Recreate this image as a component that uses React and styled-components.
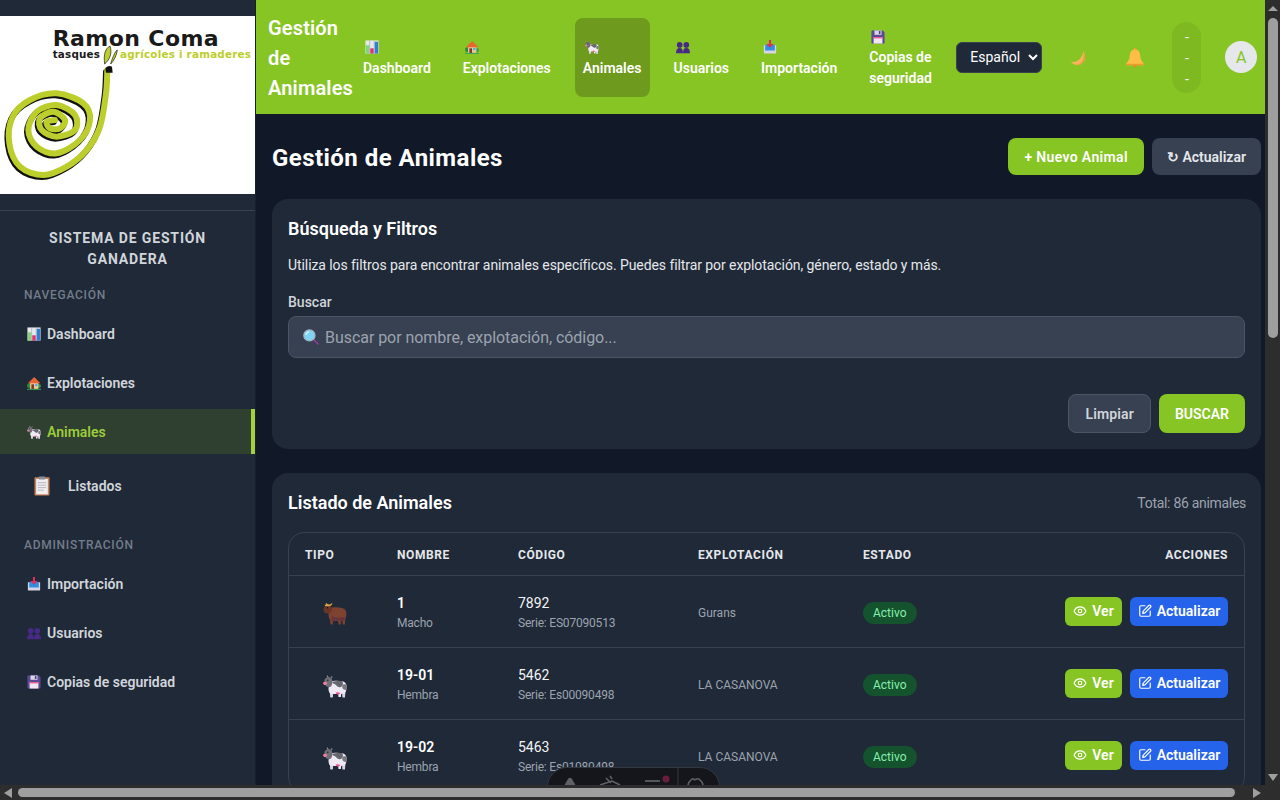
import React from 'react';
import styled, { createGlobalStyle } from 'styled-components';
import { Eye, SquarePen } from 'lucide-react';

const FONT = `Roboto, "Noto Sans", "Liberation Sans", sans-serif`;

const GlobalStyle = createGlobalStyle`
html {
  color-scheme: dark;
  background: #111827;
}
body {
  margin: 0;
  overflow: hidden;
  font-family: ${FONT};
  font-size: 14px;
  line-height: 21px;
  color: #fff;
}
* { box-sizing: border-box; }
`;

// smooth line through a list of points (catmull-rom), used for the logo spiral
const smooth = (pts) => {
  let d = `M${pts[0][0]} ${pts[0][1]}`;
  for (let i = 0; i < pts.length - 1; i++) {
    const p0 = pts[i - 1] || pts[i];
    const p1 = pts[i];
    const p2 = pts[i + 1];
    const p3 = pts[i + 2] || p2;
    d += ` C${p1[0] + (p2[0] - p0[0]) / 6} ${p1[1] + (p2[1] - p0[1]) / 6} ${p2[0] - (p3[0] - p1[0]) / 6} ${p2[1] - (p3[1] - p1[1]) / 6} ${p2[0]} ${p2[1]}`;
  }
  return d;
};

const SPIRAL = smooth([
  [322, 210], [318, 280], [300, 380], [260, 450], [200, 500], [130, 525], [60, 500], [28, 430], [38, 350],
  [90, 300], [170, 280], [250, 310], [270, 360], [240, 420], [170, 460], [110, 440], [85, 390], [110, 335],
  [170, 315], [225, 345], [225, 390], [170, 410], [125, 390], [120, 355], [160, 335], [195, 360], [180, 385],
  [150, 385], [140, 365], [165, 360],
]);

const Logo = () => (
  <LogoSvg viewBox="0 48 765 534">
    <rect x="0" y="48" width="765" height="534" fill="#fff" />
    <path d={SPIRAL} fill="none" stroke="#111" strokeWidth="18" strokeLinecap="round" transform="translate(-4 6)" />
    <path d={SPIRAL} fill="none" stroke="#bcce2b" strokeWidth="18" strokeLinecap="round" />
    <path d="M336 200c-8-4-16-2-20 6l2 12h20z" fill="#111" />
    <path d="M330 138c-14 8-20 24-16 54 14-12 24-32 16-54z" fill="#bcce2b" stroke="#111" strokeWidth="2" />
    <path d="M352 150c-6 2-16 26-20 42 10-10 18-26 20-42z" fill="#bcce2b" stroke="#111" strokeWidth="2" />
    <LogoText x="158" y="139" fontSize="66" textLength="498" fill="#1a1a1a">Ramon Coma</LogoText>
    <LogoText x="158" y="174" fontSize="31" textLength="142" fill="#1a1a1a">tasques</LogoText>
    <LogoText x="360" y="174" fontSize="31" textLength="393" fill="#bcce2b">agrícoles i ramaderes</LogoText>
  </LogoSvg>
);

// the page shows windows colour emoji, which are not installed here, so they are drawn
const ChartEmoji = ({ size = 14 }) => (
  <Glyph $size={size} viewBox="0 0 16 16">
    <rect x="0.5" y="0.5" width="15" height="15" fill="#e6e8ec" />
    <rect x="1" y="6" width="4" height="9.5" fill="#7fd67a" />
    <rect x="6" y="9.5" width="4" height="6" fill="#e8306f" />
    <rect x="11" y="2" width="4" height="13.5" fill="#2f7fd6" />
    <path d="M5.3 0.5v15M10.5 0.5v15" stroke="#9aa0aa" strokeWidth="0.6" />
  </Glyph>
);

const HouseEmoji = ({ size = 14 }) => (
  <Glyph $size={size} viewBox="0 0 16 16">
    <circle cx="2.6" cy="11" r="2.6" fill="#2e8b3e" />
    <circle cx="13.6" cy="11.5" r="2.3" fill="#3a9b4a" />
    <rect x="3.5" y="7" width="9.5" height="8" fill="#f0c59a" />
    <path d="M8.2 1.2 15.4 8.2H1z" fill="#e8662f" />
    <rect x="5" y="9.5" width="3" height="5.5" fill="#7a3c20" />
    <rect x="9.3" y="9" width="2.6" height="2.6" fill="#49b3e8" />
    <rect x="0" y="14.6" width="16" height="1.2" fill="#33a455" />
  </Glyph>
);

const CowEmoji = ({ size = 14 }) => (
  <Glyph $size={size} viewBox="0 0 24 24">
    <path d="M7 7.5c3-1 9-1 12.5-.3 2.6.6 4 2.2 4 5.2 0 3-.4 5-1.2 6.4l-.3 4.2h-2.4l-.3-3.4-1.2.6-.2 2.8h-2.4l-.3-3.1H10l-.3 3.1H7.4l-.4-3.4c-1-1-1.5-3-1.5-5.3z" fill="#efe9f4" />
    <path d="M9 8c3-1 7.5-1.2 10.4-.8 1.2 2.4.4 5.6-2.6 6-2.4.3-3.2-1.6-4.4-2.6-1-.9-2.6-.6-3.4-2.6z" fill="#66666e" />
    <path d="M20 10.5c1.4-.4 2.8-.4 3.5.2.2 1.8 0 3.6-.6 5.2-1.4.2-3.2-.6-3.6-2.4-.2-1.2 0-2.4.7-3z" fill="#77777e" />
    <path d="M1.6 5.4c.8-1.4 2.2-2.4 3.8-2.4 1.8 0 3.6 1 3.8 3 .3 2.2.2 4.6-1 6.2-1.2 1.2-3.2 1.2-4.6.4-1.4-1-2.6-5.4-2-7.2z" fill="#6f6f77" />
    <path d="M4.4 3.2 3.6 1.2l2 1zM8 3.6l1-2 .4 2.4z" fill="#a8a8a8" />
    <path d="M.2 8.7c.7-1.2 3-1.4 3.6-.2.5 1-.2 2.6-1.6 2.6S-.3 9.8.2 8.7z" fill="#ef7f9a" />
    <circle cx="4.8" cy="6.2" r="0.7" fill="#1e1e22" />
    <path d="M12.6 18.8c1.4-.7 3.4-.6 4.6.1-.4 1.2-1.2 1.7-2.2 1.7s-2-.6-2.4-1.8z" fill="#e9558f" />
    <path d="M7.4 19.8h2.3v3.6H7.4zM19.6 19.8H22v3.6h-2.4z" fill="#d9d0ea" />
  </Glyph>
);

const OxEmoji = ({ size = 24 }) => (
  <Glyph $size={size} viewBox="0 0 24 24">
    <path d="M6 6.5c3-1.6 9-1.6 13-.6 2.8.7 4.4 2.4 4.4 5.4 0 2.8-.4 4.6-1.2 6l-.3 5.2h-2.2l-.4-3.9-1.4.6-.2 3.3h-2.2l-.3-3.6H10l-.3 3.6H7.5l-.4-4.6C6 16.6 5.5 14.6 5.5 12z" fill="#7d4230" />
    <path d="M.6 6.6c.6-2 2.4-3.4 4.4-3.4 2 0 3.6 1.2 3.8 3.2.2 2.2-.6 3.8-2.2 4.6-1.4.6-3.2.6-4.4 0C.8 10.2.2 8.4.6 6.6z" fill="#6a3526" />
    <path d="M1.4 3.8C2.4 3.4 3 2.4 3 .8c1 1 2.4 1.8 3.6 1.6 1.2-.2 2-.8 2.6-1.8.2 1.6-.6 3-2 3.4-2 .6-4 .4-5.8-.2z" fill="#d9a441" />
    <circle cx="4.4" cy="5.8" r="0.7" fill="#1c1210" />
    <path d="M9 14.5c4 1.6 8 1.6 12.6.2l-.4 3.8H8z" fill="#57294a" opacity="0.6" />
  </Glyph>
);

const UsersEmoji = ({ size = 14 }) => (
  <Glyph $size={size} viewBox="0 0 16 16">
    <g fill="#472a86">
      <circle cx="4.2" cy="5.6" r="3.2" />
      <circle cx="11.8" cy="5.6" r="3.2" />
      <path d="M0 15c0-4 1.6-6 4.2-6S8 11 8 15zM8 15c0-4 1.2-6 3.8-6s4.2 2 4.2 6z" />
    </g>
  </Glyph>
);

const InboxEmoji = ({ size = 14 }) => (
  <Glyph $size={size} viewBox="0 0 16 16">
    <path d="M1 6h14v8.5a1 1 0 0 1-1 1H2a1 1 0 0 1-1-1z" fill="#d8d3e6" />
    <rect x="2.5" y="5.5" width="11" height="6.5" fill="#2f8fe0" />
    <path d="M6.8 0h2.4v4.6H12L8 8.8 4 4.6h2.8z" fill="#e22c5c" />
  </Glyph>
);

const FloppyEmoji = ({ size = 14 }) => (
  <Glyph $size={size} viewBox="0 0 16 16">
    <path d="M1 .5h12.5L15.5 2.5v12a1 1 0 0 1-1 1h-13a1 1 0 0 1-1-1v-13A1 1 0 0 1 1 .5z" fill="#5b4a96" />
    <rect x="4" y="0.5" width="8" height="5" fill="#d9d6e4" />
    <rect x="9" y="1.2" width="1.8" height="3.4" fill="#4a3c80" />
    <rect x="3" y="8" width="10" height="7.5" fill="#f1e7f2" />
    <rect x="3" y="8" width="10" height="1.6" fill="#ee5a8c" />
  </Glyph>
);

const ClipboardEmoji = ({ size = 20 }) => (
  <Glyph $size={size} viewBox="0 0 20 24">
    <rect x="1" y="1.5" width="18" height="22" rx="1.2" fill="#c8835a" />
    <rect x="3" y="3.5" width="14" height="18.5" fill="#f0eff2" />
    <rect x="6" y="0.5" width="8" height="3.6" rx="0.8" fill="#8a8f98" />
    <path d="M5 8h10M5 11h10M5 14h10M5 17h7" stroke="#a7a9b3" strokeWidth="1" />
  </Glyph>
);

const MoonEmoji = () => (
  <Glyph $size={16} viewBox="0 0 16 16">
    <path d="M13.5 1C16 6 15.5 11 12 13.5 9 15.8 4 15.5.7 11.7 4 12.4 7.5 11.5 9.8 9 11.8 6.8 13 4 13.5 1z" fill="#f8b65c" />
    <path d="M13.5 1C16 6 15.5 11 12 13.5c-1.6 1.2-3.6 1.7-5.6 1.5 2.4-.6 4.6-2 5.8-4.2 1.3-2.6 1.6-6.4 1.3-9.8z" fill="#ee9f42" />
  </Glyph>
);

const BellEmoji = () => (
  <Glyph $size={20} viewBox="0 0 20 20">
    <circle cx="10" cy="1.4" r="1.4" fill="#f5a623" />
    <path d="M10 1.6c3.6 0 5 2.8 5.2 6 .2 3.4 1.2 5.6 3.6 7.8v1.8H1.2v-1.8C3.6 13.2 4.6 11 4.8 7.6 5 4.4 6.4 1.6 10 1.6z" fill="#fdbd47" />
    <path d="M1.2 15.8h17.6v1.4H1.2z" fill="#f0982a" />
    <path d="M7.8 17.4h4.4c-.4 1.2-1.2 2.2-2.2 2.2s-1.8-1-2.2-2.2z" fill="#e8862a" />
  </Glyph>
);

const SearchEmoji = () => (
  <Glyph $size={16} viewBox="0 0 16 16">
    <path d="M9.6 10.4l1-1 5 5c.4.4.4 1 0 1.2-.3.3-.8.3-1.1 0z" fill="#8d3f9a" />
    <circle cx="6.4" cy="6.4" r="5.6" fill="#7fd4f5" stroke="#a7b2c4" strokeWidth="1.2" />
    <path d="M3 6c.2-1.8 1.4-3 3-3.2" stroke="#e5f7fd" strokeWidth="1.2" fill="none" />
  </Glyph>
);

// what shows of the dev toolbar above the scrollbar
const DevIcons = () => (
  <DevSvg viewBox="0 0 173 18">
    <path d="M16 18l4-7c1-1.6 3-1.6 4 0l4 7z" fill="#5f6169" />
    <path d="M52 17l12-4 8 4M58 10l5 5M62 8l2 3" stroke="#5f6169" strokeWidth="1.6" fill="none" />
    <path d="M97 13h15" stroke="#6a6c74" strokeWidth="1.6" />
    <circle cx="118" cy="11" r="3.5" fill="#6b1d3c" />
    <path d="M130 0v18" stroke="#343841" strokeWidth="1" />
    <path d="M140 17c1-5 3-4 4-6 1-.8 2 .6 3 .6s3-1.4 4-.6c1 2 3 1 4 6" stroke="#5f6169" strokeWidth="1.6" fill="none" />
  </DevSvg>
);

const ANIMALS = [
  { name: '1', sex: 'Macho', code: '7892', serie: 'ES07090513', farm: 'Gurans' },
  { name: '19-01', sex: 'Hembra', code: '5462', serie: 'Es00090498', farm: 'LA CASANOVA' },
  { name: '19-02', sex: 'Hembra', code: '5463', serie: 'Es01080498', farm: 'LA CASANOVA' },
];

const TOP_NAV = [
  { label: 'Dashboard', icon: <ChartEmoji /> },
  { label: 'Explotaciones', icon: <HouseEmoji /> },
  { label: 'Animales', icon: <CowEmoji />, active: true },
  { label: 'Usuarios', icon: <UsersEmoji /> },
  { label: 'Importación', icon: <InboxEmoji /> },
  { label: 'Copias de seguridad', icon: <FloppyEmoji />, narrow: true },
];

const App = () => {
  return (
    <Page>
      <GlobalStyle />
      <Sidebar>
        <LogoBox>
          <Logo />
        </LogoBox>
        <SideTitle>Sistema de Gestión Ganadera</SideTitle>
        <SideHeading>Navegación</SideHeading>
        <SideList>
          <SideItem><ChartEmoji />Dashboard</SideItem>
          <SideItem><HouseEmoji />Explotaciones</SideItem>
          <SideItem $active><CowEmoji />Animales</SideItem>
          <SideItemLarge><ClipboardEmoji />Listados</SideItemLarge>
        </SideList>
        <SideHeading $gap>Administración</SideHeading>
        <SideList>
          <SideItem><InboxEmoji />Importación</SideItem>
          <SideItem><UsersEmoji />Usuarios</SideItem>
          <SideItem><FloppyEmoji />Copias de seguridad</SideItem>
        </SideList>
      </Sidebar>

      <Content>
        <Header>
          <HeaderTitle>Gestión de Animales</HeaderTitle>
          <TopNav>
            {TOP_NAV.map((item) => (
              <TopItem key={item.label} $active={item.active} $narrow={item.narrow}>
                <TopIcon>{item.icon}</TopIcon>
                <span>{item.label}</span>
              </TopItem>
            ))}
          </TopNav>
          <LangSelect defaultValue="es">
            <option value="es">Español</option>
            <option value="ca">Català</option>
          </LangSelect>
          <IconSlot $width={16} $left={28}><MoonEmoji /></IconSlot>
          <IconSlot $width={20} $left={39}><BellEmoji /></IconSlot>
          <Dashes>
            <span>-</span>
            <span>-</span>
            <span>-</span>
          </Dashes>
          <Avatar>A</Avatar>
        </Header>

        <Main>
          <PageHead>
            <PageTitle>Gestión de Animales</PageTitle>
            <HeadActions>
              <HeadButton $primary>+ Nuevo Animal</HeadButton>
              <HeadButton>↻ Actualizar</HeadButton>
            </HeadActions>
          </PageHead>

          <Card>
            <CardTitle>Búsqueda y Filtros</CardTitle>
            <CardText>Utiliza los filtros para encontrar animales específicos. Puedes filtrar por explotación, género, estado y más.</CardText>
            <FieldLabel htmlFor="buscar">Buscar</FieldLabel>
            <SearchWrap>
              <SearchIcon><SearchEmoji /></SearchIcon>
              <SearchInput id="buscar" placeholder="Buscar por nombre, explotación, código..." />
            </SearchWrap>
            <FormActions>
              <FormButton>Limpiar</FormButton>
              <FormButton $primary>BUSCAR</FormButton>
            </FormActions>
          </Card>

          <Card>
            <ListHead>
              <CardTitle>Listado de Animales</CardTitle>
              <Total>Total: 86 animales</Total>
            </ListHead>
            <TableWrap>
              <Table>
                <colgroup>
                  <col width="92" />
                  <col width="121" />
                  <col width="180" />
                  <col width="165" />
                  <col />
                </colgroup>
                <thead>
                  <tr>
                    <Th>Tipo</Th>
                    <Th>Nombre</Th>
                    <Th>Código</Th>
                    <Th>Explotación</Th>
                    <Th>Estado</Th>
                    <Th $right>Acciones</Th>
                  </tr>
                </thead>
                <tbody>
                  {ANIMALS.map((a) => (
                    <tr key={a.name}>
                      <Td>
                        <AnimalIcon>{a.sex === 'Macho' ? <OxEmoji /> : <CowEmoji size={24} />}</AnimalIcon>
                      </Td>
                      <Td>
                        <Strong>{a.name}</Strong>
                        <Sub>{a.sex}</Sub>
                      </Td>
                      <Td>
                        <Code>{a.code}</Code>
                        <Sub>Serie: {a.serie}</Sub>
                      </Td>
                      <Td><Farm>{a.farm}</Farm></Td>
                      <Td><Status>Activo</Status></Td>
                      <Td>
                        <RowActions>
                          <RowButton $kind="view"><Eye size={14} />Ver</RowButton>
                          <RowButton $kind="edit"><SquarePen size={14} />Actualizar</RowButton>
                        </RowActions>
                      </Td>
                    </tr>
                  ))}
                </tbody>
              </Table>
            </TableWrap>
          </Card>
        </Main>
      </Content>

      <DevToolbar>
        <DevIcons />
      </DevToolbar>

      <VerticalBar>
        <ArrowUp />
        <VerticalThumb />
        <ArrowDown />
      </VerticalBar>
      <HorizontalBar>
        <ArrowLeft />
        <HorizontalThumb />
        <ArrowRight />
      </HorizontalBar>
    </Page>
  );
};

export default App;

const Page = styled.div`
display: flex;
width: 1280px;
height: 800px;
overflow: hidden;
background: #111827;
`;

const Sidebar = styled.aside`
flex: 0 0 256px;
height: 800px;
padding-top: 16px;
background: #1f2937;
border-right: 1px solid #182130;
`;

const LogoBox = styled.div`
height: 195px;
padding-bottom: 16px;
border-bottom: 1px solid #374151;
`;

const LogoSvg = styled.svg`
display: block;
width: 255px;
height: 178px;
`;

const LogoText = styled.text`
font-family: "DejaVu Sans", sans-serif;
font-weight: 700;
`;

const SideTitle = styled.h2`
margin: 0;
padding: 17px 24px 0;
font-size: 14px;
line-height: 21px;
font-weight: 700;
text-align: center;
text-transform: uppercase;
letter-spacing: 0.06em;
color: #d1d5db;
`;

const SideHeading = styled.h3`
margin: ${(p) => (p.$gap ? '23px' : '16px')} 0 7px;
padding-left: 24px;
font-size: 12px;
line-height: 18px;
font-weight: 500;
text-transform: uppercase;
letter-spacing: 0.06em;
color: #737c8a;
`;

const SideList = styled.nav`
display: flex;
flex-direction: column;
gap: 4px;
`;

const SideItem = styled.a`
display: flex;
align-items: center;
gap: 6px;
height: 45px;
padding: 1px 0 0 27px;
font-weight: 600;
color: ${(p) => (p.$active ? '#9ccc3c' : '#d1d5db')};
background: ${(p) => (p.$active ? '#2f3f30' : 'transparent')};
border-right: ${(p) => (p.$active ? '4px solid #a3d13a' : '0')};
`;

const SideItemLarge = styled(SideItem)`
height: 55px;
padding-left: 32px;
gap: 16px;
`;

const Content = styled.div`
flex: 1;
min-width: 0;
`;

const Header = styled.header`
display: flex;
align-items: center;
height: 114px;
padding-left: 12px;
background: #87c525;
`;

const HeaderTitle = styled.h1`
flex: 0 0 87px;
margin: 0;
padding-top: 2px;
font-size: 20px;
line-height: 30px;
font-weight: 600;
letter-spacing: 0.15px;
`;

const TopNav = styled.nav`
display: flex;
flex: none;
align-self: stretch;
gap: 16px;
margin: 18px 16px 17px 0;
`;

const TopItem = styled.a`
display: flex;
flex-direction: column;
justify-content: center;
padding: 8px;
width: ${(p) => (p.$narrow ? '79px' : 'auto')};
font-weight: 600;
color: #fff;
border-radius: 8px;
background: ${(p) => (p.$active ? '#6e9a1e' : 'transparent')};
`;

const TopIcon = styled.span`
display: flex;
align-items: center;
height: 21px;
padding-left: 2px;
`;

const LangSelect = styled.select`
flex: none;
width: 86px;
height: 31px;
padding: 0 4px 0 9px;
font-family: inherit;
font-size: 14px;
color: #fff;
background: #1f2937;
border: 1px solid #374151;
border-radius: 6px;
`;

const IconSlot = styled.div`
display: flex;
flex: 0 0 ${(p) => p.$width}px;
margin-left: ${(p) => p.$left}px;
padding-top: 1px;
`;

const Dashes = styled.div`
display: flex;
flex: none;
flex-direction: column;
align-items: center;
width: 29px;
margin-left: 27px;
padding: 5px 0 3px;
border-radius: 15px;
background: #7fb921;
`;

const Avatar = styled.div`
display: flex;
align-items: center;
justify-content: center;
flex: 0 0 32px;
height: 32px;
margin-left: 24px;
font-size: 16px;
color: #87c525;
background: #e5e7eb;
border-radius: 50%;
`;

const Main = styled.main`
display: flex;
flex-direction: column;
gap: 24px;
padding: 24px 19px 0 16px;
`;

const PageHead = styled.div`
display: flex;
align-items: center;
justify-content: space-between;
height: 37px;
`;

const PageTitle = styled.h2`
margin: 0;
padding-top: 3px;
font-size: 24px;
line-height: 36px;
font-weight: 700;
letter-spacing: 0.45px;
`;

const HeadActions = styled.div`
display: flex;
gap: 8px;
`;

const HeadButton = styled.button`
height: 37px;
padding: 0 ${(p) => (p.$primary ? '16px' : '15px')};
font-family: inherit;
font-size: 14px;
font-weight: 600;
letter-spacing: ${(p) => (p.$primary ? '0.35px' : '0')};
color: ${(p) => (p.$primary ? '#fff' : '#e5e7eb')};
background: ${(p) => (p.$primary ? '#87c525' : '#374151')};
border: none;
border-radius: 8px;
`;

const Card = styled.section`
padding: 16px;
background: #1f2937;
border-radius: 16px;
`;

const CardTitle = styled.h3`
margin: 0;
font-size: 18px;
line-height: 28px;
font-weight: 600;
`;

const CardText = styled.p`
margin: 12px 0 16px;
letter-spacing: -0.08px;
color: #e5e7eb;
`;

const FieldLabel = styled.label`
display: block;
margin-bottom: 3px;
font-weight: 500;
color: #d1d5db;
`;

const SearchWrap = styled.div`
position: relative;
`;

const SearchIcon = styled.span`
position: absolute;
left: 15px;
top: 13px;
display: flex;
`;

const SearchInput = styled.input`
display: block;
width: 100%;
height: 42px;
padding: 0 12px 0 36px;
font-family: inherit;
font-size: 16px;
letter-spacing: -0.05px;
color: #fff;
background: #374151;
border: 1px solid #4b5563;
border-radius: 8px;
outline: none;
&::placeholder {
  color: #9ca3af;
}
`;

const FormActions = styled.div`
display: flex;
justify-content: flex-end;
gap: 8px;
margin-top: 36px;
`;

const FormButton = styled.button`
height: 39px;
padding: 0 16px;
font-family: inherit;
font-size: 14px;
font-weight: 600;
letter-spacing: ${(p) => (p.$primary ? '0' : '0.15px')};
color: ${(p) => (p.$primary ? '#fff' : '#d1d5db')};
background: ${(p) => (p.$primary ? '#87c525' : '#374151')};
border: ${(p) => (p.$primary ? 'none' : '1px solid #4b5563')};
border-radius: 8px;
`;

const ListHead = styled.div`
display: flex;
align-items: center;
justify-content: space-between;
margin-bottom: 15px;
`;

const Total = styled.span`
margin-right: -1px;
letter-spacing: -0.3px;
color: #9ca3af;
`;

const TableWrap = styled.div`
border: 1px solid #374151;
border-radius: 16px;
overflow: hidden;
`;

const Table = styled.table`
width: 100%;
table-layout: fixed;
border-collapse: collapse;
`;

const Th = styled.th`
height: 42px;
padding: 3px 16px 0;
font-size: 12px;
line-height: 18px;
font-weight: 700;
letter-spacing: 0.05em;
text-transform: uppercase;
text-align: ${(p) => (p.$right ? 'right' : 'left')};
color: #e5e7eb;
border-bottom: 1px solid #374151;
`;

const Td = styled.td`
height: 72px;
padding: 2px 16px 0;
vertical-align: middle;
border-bottom: 1px solid #374151;
`;

const AnimalIcon = styled.div`
display: flex;
justify-content: center;
padding-top: 3px;
`;

const Strong = styled.div`
font-weight: 600;
color: #fff;
`;

const Code = styled.div`
color: #f3f4f6;
`;

const Sub = styled.div`
font-size: 12px;
line-height: 18px;
letter-spacing: -0.2px;
color: #9ca3af;
`;

const Farm = styled.div`
padding-top: 2px;
font-size: 12px;
color: #9ca3af;
`;

const Status = styled.span`
display: inline-block;
margin-top: 2px;
padding: 2px 10px;
font-size: 12px;
line-height: 18px;
font-weight: 400;
color: #86efac;
background: #14532d;
border-radius: 11px;
`;

const RowActions = styled.div`
display: flex;
justify-content: flex-end;
gap: 8px;
margin-bottom: 2px;
`;

const RowButton = styled.button`
display: flex;
align-items: center;
justify-content: center;
gap: 5px;
width: ${(p) => (p.$kind === 'view' ? '57px' : '98px')};
height: 29px;
padding: 0;
font-family: inherit;
font-size: 14px;
font-weight: 600;
color: #fff;
background: ${(p) => (p.$kind === 'view' ? '#87c525' : '#2563eb')};
border: none;
border-radius: 6px;
`;

const Glyph = styled.svg`
display: block;
flex: none;
width: ${(p) => p.$size}px;
height: ${(p) => p.$size}px;
`;

const DevToolbar = styled.div`
position: fixed;
left: 547px;
top: 767px;
width: 173px;
height: 40px;
background: #14161c;
border: 1px solid #343841;
border-radius: 20px;
overflow: hidden;
`;

const DevSvg = styled.svg`
display: block;
width: 173px;
height: 18px;
`;

const VerticalBar = styled.div`
position: fixed;
top: 0;
right: 0;
display: flex;
flex-direction: column;
align-items: center;
width: 15px;
height: 800px;
padding-top: 6px;
background: #2d2d2d;
`;

const VerticalThumb = styled.div`
width: 10px;
height: 320px;
margin-top: 7px;
background: #9f9f9f;
border-radius: 5px;
`;

const HorizontalBar = styled.div`
position: fixed;
left: 0;
bottom: 0;
display: flex;
align-items: center;
width: 1265px;
height: 15px;
padding-left: 4px;
background: #2d2d2d;
`;

const HorizontalThumb = styled.div`
width: 1217px;
height: 9px;
margin: 0 18px 0 6px;
background: #9f9f9f;
border-radius: 5px;
`;

const ArrowUp = styled.span`
border: 5px solid transparent;
border-top: 0;
border-bottom: 5px solid #9f9f9f;
`;

const ArrowDown = styled(ArrowUp)`
position: absolute;
top: 774px;
left: 3px;
border: 5px solid transparent;
border-bottom: 0;
border-top: 7px solid #9f9f9f;
`;

const ArrowLeft = styled.span`
border: 5px solid transparent;
border-left: 0;
border-right: 8px solid #9f9f9f;
`;

const ArrowRight = styled.span`
border: 5px solid transparent;
border-right: 0;
border-left: 8px solid #9f9f9f;
`;
